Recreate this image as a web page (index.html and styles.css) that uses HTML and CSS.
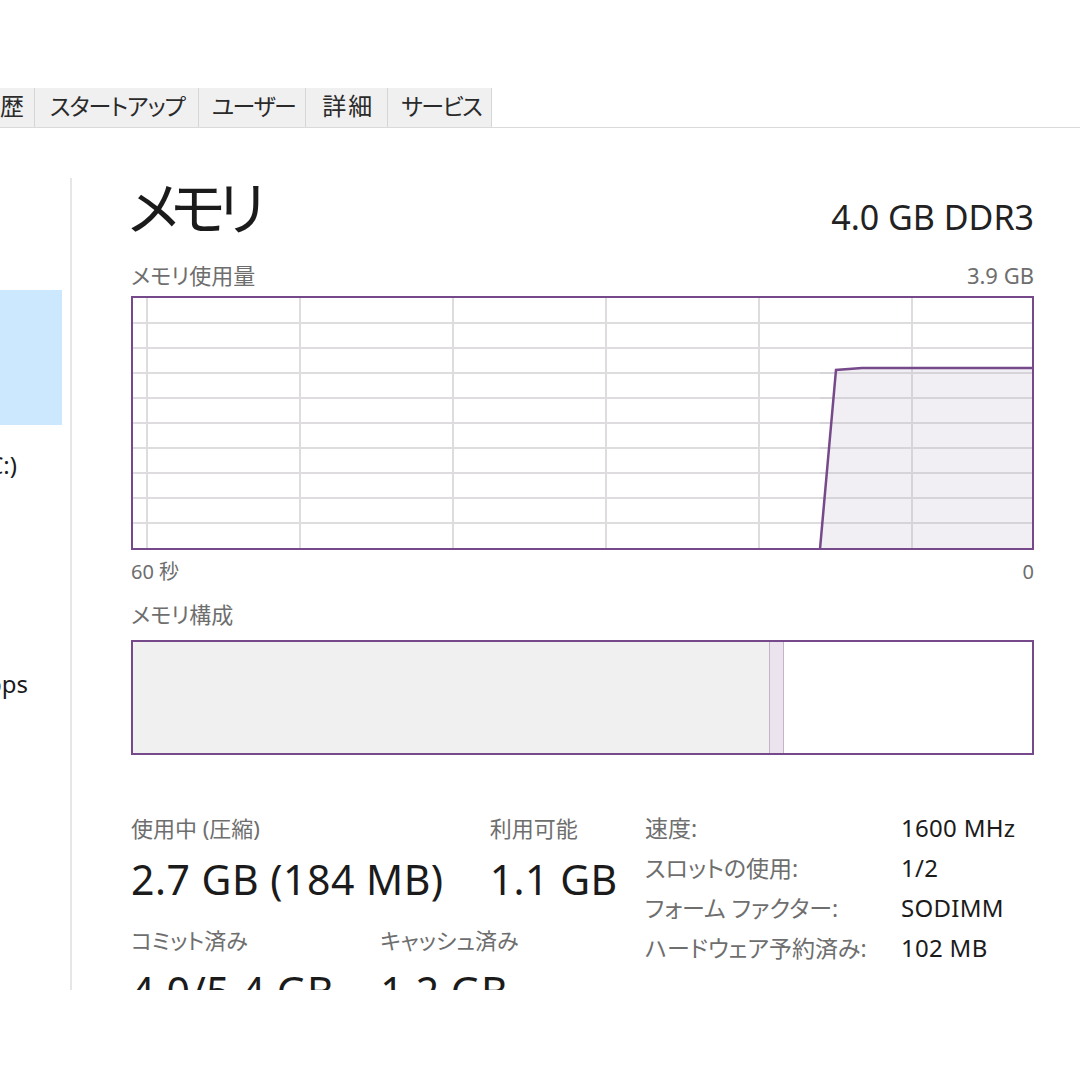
FILE: index.html
```html
<!DOCTYPE html>
<html lang="ja">
<head>
  <meta charset="UTF-8"/>
  <title>タスク マネージャー - メモリ</title>
  <link rel="stylesheet" href="styles.css">
</head>
<body>
<div class="app">
  <div class="tabs">
    <div class="tab tab-cut"><span>アプリの履歴</span></div>
    <div class="tab tab-wide">スタートアップ</div>
    <div class="tab">ユーザー</div>
    <div class="tab tab-kanji">詳細</div>
    <div class="tab">サービス</div>
  </div>

  <div class="body">
    <div class="side">
      <div class="side-item side-cpu"></div>
      <div class="side-item side-mem selected"></div>
      <div class="side-item side-disk"><span>ディスク 0 (C:)</span></div>
      <div class="side-item side-net"><span>送信: 0 受信: 0 Kbps</span></div>
    </div>

    <div class="main">
      <div class="head">
        <h1 class="title">メモリ</h1>
        <div class="spec">4.0 GB DDR3</div>
      </div>

      <div class="label-row">
        <span>メモリ使用量</span>
        <span class="num">3.9 GB</span>
      </div>
      <div class="chart">
        <svg class="chart-svg" viewBox="0 0 899 250" width="899" height="250" preserveAspectRatio="none">
          <g class="grid">
            <line x1="0" y1="25" x2="899" y2="25"/>
            <line x1="0" y1="50" x2="899" y2="50"/>
            <line x1="0" y1="75" x2="899" y2="75"/>
            <line x1="0" y1="100" x2="899" y2="100"/>
            <line x1="0" y1="125" x2="899" y2="125"/>
            <line x1="0" y1="150" x2="899" y2="150"/>
            <line x1="0" y1="175" x2="899" y2="175"/>
            <line x1="0" y1="200" x2="899" y2="200"/>
            <line x1="0" y1="225" x2="899" y2="225"/>
            <line x1="14" y1="0" x2="14" y2="250"/>
            <line x1="167" y1="0" x2="167" y2="250"/>
            <line x1="320" y1="0" x2="320" y2="250"/>
            <line x1="473" y1="0" x2="473" y2="250"/>
            <line x1="626" y1="0" x2="626" y2="250"/>
            <line x1="779" y1="0" x2="779" y2="250"/>
          </g>
          <polygon class="area" points="687,251 703,72 729,70 900,70 900,251"/>
          <g class="grid grid-over">
            <line x1="687" y1="75" x2="899" y2="75"/>
            <line x1="687" y1="100" x2="899" y2="100"/>
            <line x1="687" y1="125" x2="899" y2="125"/>
            <line x1="687" y1="150" x2="899" y2="150"/>
            <line x1="687" y1="175" x2="899" y2="175"/>
            <line x1="687" y1="200" x2="899" y2="200"/>
            <line x1="687" y1="225" x2="899" y2="225"/>
            <line x1="779" y1="70" x2="779" y2="250"/>
          </g>
          <polyline class="usage" points="687,251 703,72 729,70 900,70"/>
        </svg>
      </div>
      <div class="axis">
        <span>60 秒</span>
        <span>0</span>
      </div>

      <div class="label-row label-comp">
        <span>メモリ構成</span>
      </div>
      <div class="comp">
        <div class="comp-used"></div>
        <div class="comp-mod"></div>
        <div class="comp-free"></div>
      </div>

      <div class="stats">
        <div class="stats-left">
          <div class="stat-row">
            <div class="stat">
              <div class="stat-label">使用中 (圧縮)</div>
              <div class="stat-value">2.7 GB (184 MB)</div>
            </div>
            <div class="stat">
              <div class="stat-label">利用可能</div>
              <div class="stat-value">1.1 GB</div>
            </div>
          </div>
          <div class="stat-row">
            <div class="stat">
              <div class="stat-label">コミット済み</div>
              <div class="stat-value">4.0/5.4 GB</div>
            </div>
            <div class="stat">
              <div class="stat-label">キャッシュ済み</div>
              <div class="stat-value">1.2 GB</div>
            </div>
          </div>
        </div>
        <div class="props">
          <div class="prop-name">速度:</div>
          <div class="prop-val">1600 MHz</div>
          <div class="prop-name">スロットの使用:</div>
          <div class="prop-val">1/2</div>
          <div class="prop-name">フォーム ファクター:</div>
          <div class="prop-val">SODIMM</div>
          <div class="prop-name">ハードウェア予約済み:</div>
          <div class="prop-val">102 MB</div>
        </div>
      </div>
    </div>
  </div>
</div>
</body>
</html>
```

FILE: styles.css
```css
body {
    margin: 0;
    background: #fff;
    font-family: "Noto Sans", "Noto Sans CJK JP", sans-serif;
    font-feature-settings: "palt";
    color: #1b1b1b;
}

.app {
    height: 990px;
    overflow: hidden;
    padding-top: 88px;
    box-sizing: border-box;
}

/* tab strip */
.tabs {
    display: flex;
    height: 40px;
    border-bottom: 1px solid #dadada;
    box-sizing: border-box;
}

.tab {
    background: #f0f0f0;
    border-right: 1px solid #d6d6d6;
    padding: 0 10px 0 13px;
    font-size: 23px;
    line-height: 36px;
    letter-spacing: -1.5px;
    color: #2a2a2a;
    white-space: nowrap;
}

.tab-wide {
    padding: 0 13px 0 15px;
    letter-spacing: -1px;
}

.tab-kanji {
    padding: 0 13px 0 16px;
    letter-spacing: 2px;
    font-size: 24px;
}

.tab-cut {
    width: 34px;
    padding: 0;
    overflow: hidden;
    display: flex;
    justify-content: flex-end;
    font-size: 24px;
    letter-spacing: 0;
}

.tab-cut span {
    padding-right: 10px;
}

/* sidebar + page */
.body {
    display: flex;
    height: 862px;
}

.side {
    width: 70px;
    margin-top: 50px;
    border-right: 2px solid #e6e6e6;
    flex-shrink: 0;
    overflow: hidden;
}

.side-item {
    width: 62px;
    display: flex;
    justify-content: flex-end;
    white-space: nowrap;
    overflow: hidden;
    font-size: 24px;
    color: #1b1b1b;
}

.side-cpu {
    height: 112px;
}

.side-mem {
    height: 135px;
}

.selected {
    background: #cce8ff;
}

.side-disk {
    width: 17px;
    height: 60px;
    padding-top: 23px;
    line-height: 34px;
}

.side-net {
    width: 28px;
    margin-top: 161px;
    line-height: 30px;
}

.main {
    flex: 1;
    padding: 50px 46px 0 59px;
}

.head {
    display: flex;
    justify-content: space-between;
    align-items: baseline;
    height: 60px;
}

.title {
    margin: 0;
    font-size: 58px;
    font-weight: normal;
    line-height: 60px;
    letter-spacing: -8px;
    margin-left: -3px;
}

.spec {
    font-size: 34px;
    color: #222;
}

.label-row {
    display: flex;
    justify-content: space-between;
    margin-top: 24px;
    font-size: 22px;
    line-height: 26px;
    color: #6e6e6e;
}

.num {
    font-size: 22px;
}

.chart {
    margin-top: 8px;
    height: 254px;
    border: 2px solid #76498a;
    box-sizing: border-box;
}

.chart-svg {
    display: block;
}

.grid line {
    stroke: #dedcdf;
    stroke-width: 2;
}

.grid-over line {
    stroke: #d6d4d8;
}

.area {
    fill: #f1eff3;
}

.usage {
    fill: none;
    stroke: #76498a;
    stroke-width: 2.5;
}

.axis {
    display: flex;
    justify-content: space-between;
    margin-top: 10px;
    font-size: 20px;
    line-height: 24px;
    color: #6e6e6e;
}

.label-comp {
    margin-top: 17px;
}

.comp {
    display: flex;
    margin-top: 13px;
    height: 115px;
    border: 2px solid #76498a;
    box-sizing: border-box;
}

.comp-used {
    width: 636px;
    background: #f0f0f0;
}

.comp-mod {
    width: 13px;
    background: #ebe4ee;
    border-left: 1px solid #c3b4c9;
    border-right: 1px solid #c3b4c9;
}

.comp-free {
    flex: 1;
}

/* numbers */
.stats {
    display: flex;
    margin-top: 60px;
}

.stats-left {
    width: 514px;
    flex-shrink: 0;
}

.stat-row {
    display: flex;
    gap: 46px;
    margin-bottom: 24px;
}

.stat-label {
    font-size: 22px;
    line-height: 26px;
    color: #6e6e6e;
}

.stat-value {
    font-size: 41px;
    line-height: 48px;
    letter-spacing: 0.5px;
    margin-top: 14px;
    color: #1b1b1b;
}

.props {
    display: grid;
    grid-template-columns: 256px auto;
    grid-auto-rows: 40px;
    margin-top: -7px;
    font-size: 23px;
    line-height: 40px;
}

.prop-name {
    color: #6e6e6e;
}

.prop-val {
    font-size: 24px;
    letter-spacing: 0.3px;
    color: #1b1b1b;
}
```
